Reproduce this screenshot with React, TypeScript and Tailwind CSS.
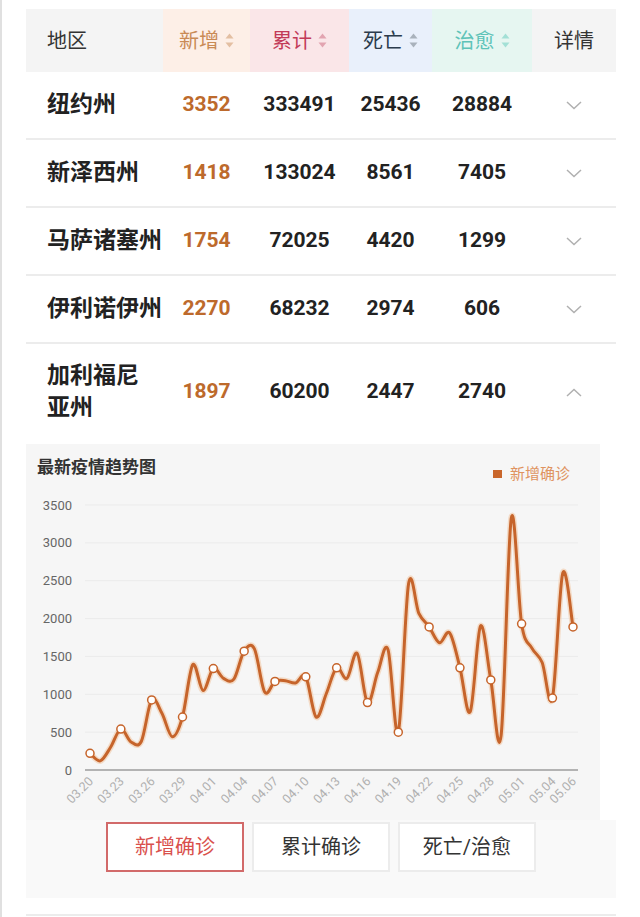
import React from 'react'

type Row = {
  name: string[]
  add: number
  total: number
  dead: number
  cured: number
  open?: boolean
}

const rows: Row[] = [
  { name: ['纽约州'], add: 3352, total: 333491, dead: 25436, cured: 28884 },
  { name: ['新泽西州'], add: 1418, total: 133024, dead: 8561, cured: 7405 },
  { name: ['马萨诸塞州'], add: 1754, total: 72025, dead: 4420, cured: 1299 },
  { name: ['伊利诺伊州'], add: 2270, total: 68232, dead: 2974, cured: 606 },
  { name: ['加利福尼', '亚州'], add: 1897, total: 60200, dead: 2447, cured: 2740, open: true },
]

// daily new cases, 03.20 -> 05.06
const series = [
  220, 120, 300, 540, 370, 380, 925, 750, 440, 700, 1390, 1050,
  1340, 1210, 1200, 1570, 1600, 1030, 1170, 1180, 1150, 1230, 700, 1010,
  1350, 1210, 1540, 890, 1290, 1590, 500, 2460, 2070, 1890, 1680, 1810,
  1350, 770, 1900, 1190, 450, 3330, 1930, 1610, 1420, 950, 2600, 1890,
]

const labels: [number, string][] = [
  [0, '03.20'], [3, '03.23'], [6, '03.26'], [9, '03.29'], [12, '04.01'],
  [15, '04.04'], [18, '04.07'], [21, '04.10'], [24, '04.13'], [27, '04.16'],
  [30, '04.19'], [33, '04.22'], [36, '04.25'], [39, '04.28'], [42, '05.01'],
  [45, '05.04'], [47, '05.06'],
]

const px = (i: number) => 64 + (i * 483) / 47
const py = (v: number) => 280 - (v * 265) / 3500

function smoothPath(values: number[]) {
  const p = values.map((v, i) => [px(i), py(v)])
  let d = `M${p[0][0]},${p[0][1]}`
  for (let i = 0; i < p.length - 1; i++) {
    const p0 = p[i - 1] ?? p[i]
    const p1 = p[i]
    const p2 = p[i + 1]
    const p3 = p[i + 2] ?? p2
    const c1x = p1[0] + (p2[0] - p0[0]) / 6
    const c1y = p1[1] + (p2[1] - p0[1]) / 6
    const c2x = p2[0] - (p3[0] - p1[0]) / 6
    const c2y = p2[1] - (p3[1] - p1[1]) / 6
    d += ` C${c1x},${c1y} ${c2x},${c2y} ${p2[0]},${p2[1]}`
  }
  return d
}

function SortIcon({ color }: { color: string }) {
  return (
    <svg width="9" height="15" viewBox="0 0 9 15" className="ml-[6px]">
      <path d="M4.5 0.5 L8.5 5.5 L0.5 5.5 Z" fill={color} />
      <path d="M4.5 14.5 L8.5 9.5 L0.5 9.5 Z" fill={color} />
    </svg>
  )
}

function Chevron({ up }: { up?: boolean }) {
  return (
    <svg width="16" height="9" viewBox="0 0 16 9">
      <path
        d={up ? 'M1 8 L8 1.5 L15 8' : 'M1 1 L8 7.5 L15 1'}
        fill="none"
        stroke="#b0b0b0"
        strokeWidth="1.5"
      />
    </svg>
  )
}

function TrendChart() {
  const path = smoothPath(series)
  return (
    <svg width="574" height="330" viewBox="0 0 574 330">
      {[0, 1, 2, 3, 4, 5, 6, 7].map(k => (
        <g key={k}>
          {k > 0 && (
            <line x1="59" x2="552" y1={py(k * 500)} y2={py(k * 500)} stroke="#ebebeb" strokeWidth="1" />
          )}
          <text
            x="46"
            y={py(k * 500)}
            textAnchor="end"
            dominantBaseline="central"
            fontSize="13"
            fill="#666"
            fontFamily="Roboto, sans-serif"
          >
            {k * 500}
          </text>
        </g>
      ))}
      <line x1="59" x2="552" y1="280" y2="280" stroke="#b3b3b3" strokeWidth="2" />
      {labels.map(([i, t]) => (
        <text
          key={t}
          x={px(i) + 4}
          y={292}
          textAnchor="end"
          fontSize="12.5"
          fill="#b0b0b0"
          fontFamily="Roboto, sans-serif"
          transform={`rotate(-45 ${px(i) + 4} 292)`}
        >
          {t}
        </text>
      ))}
      <path d={path} fill="none" stroke="#f2c9a8" strokeWidth="6" strokeOpacity="0.6" />
      <path d={path} fill="none" stroke="#c6642b" strokeWidth="3" strokeLinejoin="round" />
      {labels.map(([i]) => (
        <circle key={i} cx={px(i)} cy={py(series[i])} r="4" fill="#fff" stroke="#c6642b" strokeWidth="1.5" />
      ))}
    </svg>
  )
}

export default function App() {
  const num = 'flex items-center justify-center text-[21px] font-bold'
  return (
    <div className="w-[640px] min-h-[917px] bg-white border-l-2 border-[#e0e0e0] pl-[24px] pt-[9px] font-[Roboto,'Noto_Sans_CJK_SC',sans-serif]">
      <div className="w-[590px]">
        {/* header */}
        <div className="flex h-[63px] text-[20px]">
          <div className="w-[137px] bg-[#f4f4f4] flex items-center pl-[21px] text-[#333]">地区</div>
          <div className="w-[87px] bg-[#fdefe7] flex items-center justify-center text-[#c98a55]">
            新增<SortIcon color="#e3bfa2" />
          </div>
          <div className="w-[99px] bg-[#fae6e8] flex items-center justify-center text-[#c23a58]">
            累计<SortIcon color="#e2a4b0" />
          </div>
          <div className="w-[83px] bg-[#e9f0fb] flex items-center justify-center text-[#2b3b4c]">
            死亡<SortIcon color="#a9b2bc" />
          </div>
          <div className="w-[100px] bg-[#e6f6f1] flex items-center justify-center text-[#5ec3b8]">
            治愈<SortIcon color="#a3e0d6" />
          </div>
          <div className="w-[84px] bg-[#f4f4f4] flex items-center justify-center text-[#333]">详情</div>
        </div>

        {/* rows */}
        {rows.map(r => (
          <div
            key={r.name.join('')}
            className={`flex ${r.open ? 'h-[96px]' : 'h-[68px] border-b-2 border-[#ececec]'}`}
          >
            <div className="w-[137px] flex flex-col justify-center pl-[21px] text-[23px] leading-[32px] font-bold text-[#222] whitespace-nowrap">
              {r.name.map(n => (
                <span key={n}>{n}</span>
              ))}
            </div>
            <div className={`w-[87px] ${num} text-[#bd6a2c]`}>{r.add}</div>
            <div className={`w-[99px] ${num} text-[#222]`}>{r.total}</div>
            <div className={`w-[83px] ${num} text-[#222]`}>{r.dead}</div>
            <div className={`w-[100px] ${num} text-[#222]`}>{r.cured}</div>
            <div className="w-[84px] flex items-center justify-center">
              <Chevron up={r.open} />
            </div>
          </div>
        ))}

        {/* trend panel */}
        <div className="mt-[4px] w-[574px] h-[376px] bg-[#f6f6f6] flex flex-col">
          <div className="h-[46px] flex justify-between pl-[11px] pr-[30px] pt-[13px]">
            <div className="text-[17px] leading-[20px] font-bold text-[#333]">最新疫情趋势图</div>
            <div className="flex items-center gap-[8px] h-[20px] mt-[7px] text-[15px] text-[#df9360]">
              <span className="w-[9px] h-[8px] bg-[#c9662b]" />
              新增确诊
            </div>
          </div>
          <TrendChart />
        </div>

        {/* switch buttons */}
        <div className="h-[78px] bg-[#f9f9f9] flex justify-center gap-[8px] pt-[2px]">
          <button className="w-[138px] h-[50px] border-2 border-[#d26a6a] bg-white text-[20px] text-[#d9504c]">
            新增确诊
          </button>
          <button className="w-[138px] h-[50px] border-2 border-[#ececec] bg-white text-[20px] text-[#333]">
            累计确诊
          </button>
          <button className="w-[138px] h-[50px] border-2 border-[#ececec] bg-white text-[20px] text-[#333]">
            死亡/治愈
          </button>
        </div>
        <div className="mt-[16px] border-b-2 border-[#ececec]" />
      </div>
    </div>
  )
}
